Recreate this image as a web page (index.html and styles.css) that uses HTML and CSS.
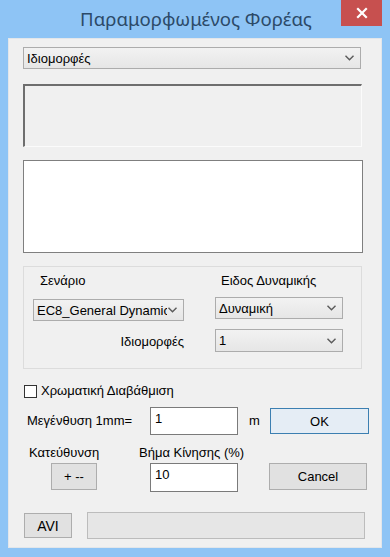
FILE: index.html
```html
<!DOCTYPE html>
<html lang="el">
<head>
    <meta charset="UTF-8">
    <meta name="viewport" content="width=device-width, initial-scale=1.0">
    <title>Παραμορφωμένος Φορέας</title>
    <link rel="stylesheet" href="styles.css">
</head>
<body>
    <div class="window">
        <div class="titlebar">
            <span class="title">Παραμορφωμένος Φορέας</span>
            <button class="close" type="button" aria-label="Close">
                <svg width="12" height="12" viewBox="0 0 12 12">
                    <path d="M2 2 L10 10 M10 2 L2 10" stroke="#fff" stroke-width="2.2" stroke-linecap="square"/>
                </svg>
            </button>
        </div>

        <div class="client">
            <div class="combo combo-top">
                <span>Ιδιομορφές</span>
                <svg class="chev" width="9" height="6" viewBox="0 0 9 6"><path d="M0.5 0.8 L4.5 4.8 L8.5 0.8" fill="none" stroke="#5a5a5a" stroke-width="1.4"/></svg>
            </div>

            <div class="sunken"></div>

            <div class="listbox"></div>

            <div class="group">
                <div class="group-grid">
                    <span class="lbl lbl-scen">Σενάριο</span>
                    <span class="lbl lbl-type">Ειδος Δυναμικής</span>

                    <div class="combo combo-scen">
                        <span class="clip">EC8_General Dynamic</span>
                        <svg class="chev" width="9" height="6" viewBox="0 0 9 6"><path d="M0.5 0.8 L4.5 4.8 L8.5 0.8" fill="none" stroke="#5a5a5a" stroke-width="1.4"/></svg>
                    </div>
                    <div class="combo combo-type">
                        <span>Δυναμική</span>
                        <svg class="chev" width="9" height="6" viewBox="0 0 9 6"><path d="M0.5 0.8 L4.5 4.8 L8.5 0.8" fill="none" stroke="#5a5a5a" stroke-width="1.4"/></svg>
                    </div>

                    <span class="lbl lbl-modes">Ιδιομορφές</span>
                    <div class="combo combo-modes">
                        <span>1</span>
                        <svg class="chev" width="9" height="6" viewBox="0 0 9 6"><path d="M0.5 0.8 L4.5 4.8 L8.5 0.8" fill="none" stroke="#5a5a5a" stroke-width="1.4"/></svg>
                    </div>
                </div>
            </div>

            <label class="check-row">
                <span class="checkbox"></span>
                <span>Χρωματική Διαβάθμιση</span>
            </label>

            <div class="row row-scale">
                <span class="lbl lbl-scale">Μεγένθυση 1mm=</span>
                <div class="textbox tb-scale">1</div>
                <span class="lbl lbl-unit">m</span>
                <button class="btn btn-ok" type="button">OK</button>
            </div>

            <div class="row row-labels">
                <span class="lbl lbl-dir">Κατεύθυνση</span>
                <span class="lbl lbl-step">Βήμα Κίνησης (%)</span>
            </div>

            <div class="row row-step">
                <button class="btn btn-dir" type="button">+ --</button>
                <div class="textbox tb-step">10</div>
                <button class="btn btn-cancel" type="button">Cancel</button>
            </div>

            <div class="row row-avi">
                <button class="btn btn-avi" type="button">AVI</button>
                <div class="progress"></div>
            </div>
        </div>
    </div>
</body>
</html>
```

FILE: styles.css
```css
body {
    margin: 0;
    padding: 0;
    background-color: #8ec4f5;
    font-family: "Liberation Sans", Arial, sans-serif;
    font-size: 13px;
    color: #000;
}
.window {
    width: 390px;
    height: 557px;
    background-color: #8ec4f5; /* window frame */
    box-sizing: border-box;
    padding: 0 8px;
}
.titlebar {
    height: 38px;
    display: flex;
    justify-content: center;
    position: relative;
}
.title {
    font-family: "Noto Sans", "Open Sans", sans-serif;
    font-size: 18.6px;
    color: #2c4a68;
    line-height: 20px;
    margin-top: 9px;
    margin-left: 2px;
}
.close {
    position: absolute;
    right: 0;
    top: 0;
    width: 41px;
    height: 26px;
    border: none;
    padding: 0;
    background-color: #c7504f;
    display: flex;
    align-items: center;
    justify-content: center;
}
.client {
    height: 510px;
    background-color: #f0f0f0;
    box-sizing: border-box;
    border: 1px solid #e2e6ea;
    padding: 8px 0 0 14px;
    display: flex;
    flex-direction: column;
    align-items: flex-start;
}
.client > * {
    flex-shrink: 0;
}
.combo {
    height: 22px;
    box-sizing: border-box;
    border: 1px solid #acacac;
    background: linear-gradient(#f2f2f2, #e6e6e6);
    display: flex;
    align-items: center;
    justify-content: space-between;
    padding: 0 6px 0 3px;
    white-space: nowrap;
    overflow: hidden;
}
.combo .chev {
    flex: none;
}
.combo-top {
    width: 338px;
}
.sunken {
    margin-top: 15px;
    width: 339px;
    height: 63px;
    box-sizing: border-box;
    border-top: 2px solid #6e6e6e;
    border-left: 2px solid #6e6e6e;
    border-right: 1px solid #fbfbfb;
    border-bottom: 1px solid #fbfbfb;
}
.listbox {
    margin-top: 13px;
    width: 340px;
    height: 93px;
    box-sizing: border-box;
    background-color: #fff;
    border: 1px solid #7f7f7f;
}
.group {
    margin-top: 13px;
    width: 339px;
    height: 103px;
    box-sizing: border-box;
    border: 1px solid #dcdcdc;
    padding: 6px 0 0 9px;
}
.group-grid {
    display: grid;
    grid-template-columns: 151px 128px;
    column-gap: 31px;
    grid-template-rows: 16px 22px 22px;
    row-gap: 0;
}
.lbl {
    white-space: nowrap;
    line-height: 16px;
}
.lbl-scen {
    padding-left: 7px;
}
.lbl-type {
    padding-left: 6px;
}
.combo-scen {
    margin-top: 10px;
}
.combo-scen .clip {
    width: 130px;
    overflow: hidden;
}
.combo-type {
    margin-top: 8px;
}
.lbl-modes {
    margin-top: 23px;
    justify-self: end;
}
.combo-modes {
    margin-top: 18px;
    height: 23px;
}
.check-row {
    margin-top: 14px;
    margin-left: 1px;
    display: flex;
    align-items: center;
    gap: 4px;
    line-height: 16px;
}
.checkbox {
    width: 13px;
    height: 13px;
    box-sizing: border-box;
    border: 1px solid #333;
    background-color: #fff;
}
.row {
    display: flex;
    align-items: center;
}
.row-scale {
    margin-top: 8px;
    height: 28px;
}
.lbl-scale {
    width: 123px;
    padding-left: 4px;
}
.textbox {
    width: 88px;
    box-sizing: border-box;
    background-color: #fff;
    border: 1px solid #7a7a7a;
    padding: 3px 0 0 4px;
    line-height: 16px;
    align-self: stretch;
}
.tb-scale {
    height: 28px;
}
.lbl-unit {
    width: 32px;
    padding-left: 11px;
    box-sizing: border-box;
}
.btn {
    font-family: "Liberation Sans", Arial, sans-serif;
    font-size: 13px;
    color: #000;
    background-color: #e1e1e1;
    border: 1px solid #adadad;
    padding: 0;
    box-sizing: border-box;
}
.btn-ok {
    width: 99px;
    height: 26px;
    border-color: #3c7fb1;
    background-color: #e5edf5;
}
.row-labels {
    margin-top: 10px;
    height: 16px;
}
.lbl-dir {
    width: 110px;
    padding-left: 6px;
}
.row-step {
    margin-top: 2px;
    height: 29px;
}
.btn-dir {
    margin-left: 28px;
    width: 46px;
    height: 27px;
    align-self: flex-start;
}
.tb-step {
    margin-left: 53px;
    height: 29px;
}
.btn-cancel {
    margin-left: 31px;
    width: 98px;
    height: 27px;
    align-self: flex-start;
}
.row-avi {
    margin-top: 20px;
    height: 27px;
}
.btn-avi {
    margin-left: 1px;
    width: 48px;
    height: 25px;
    font-size: 14px;
}
.progress {
    margin-left: 15px;
    width: 278px;
    height: 27px;
    box-sizing: border-box;
    background-color: #e6e6e6;
    border: 1px solid #bcbcbc;
}
```
